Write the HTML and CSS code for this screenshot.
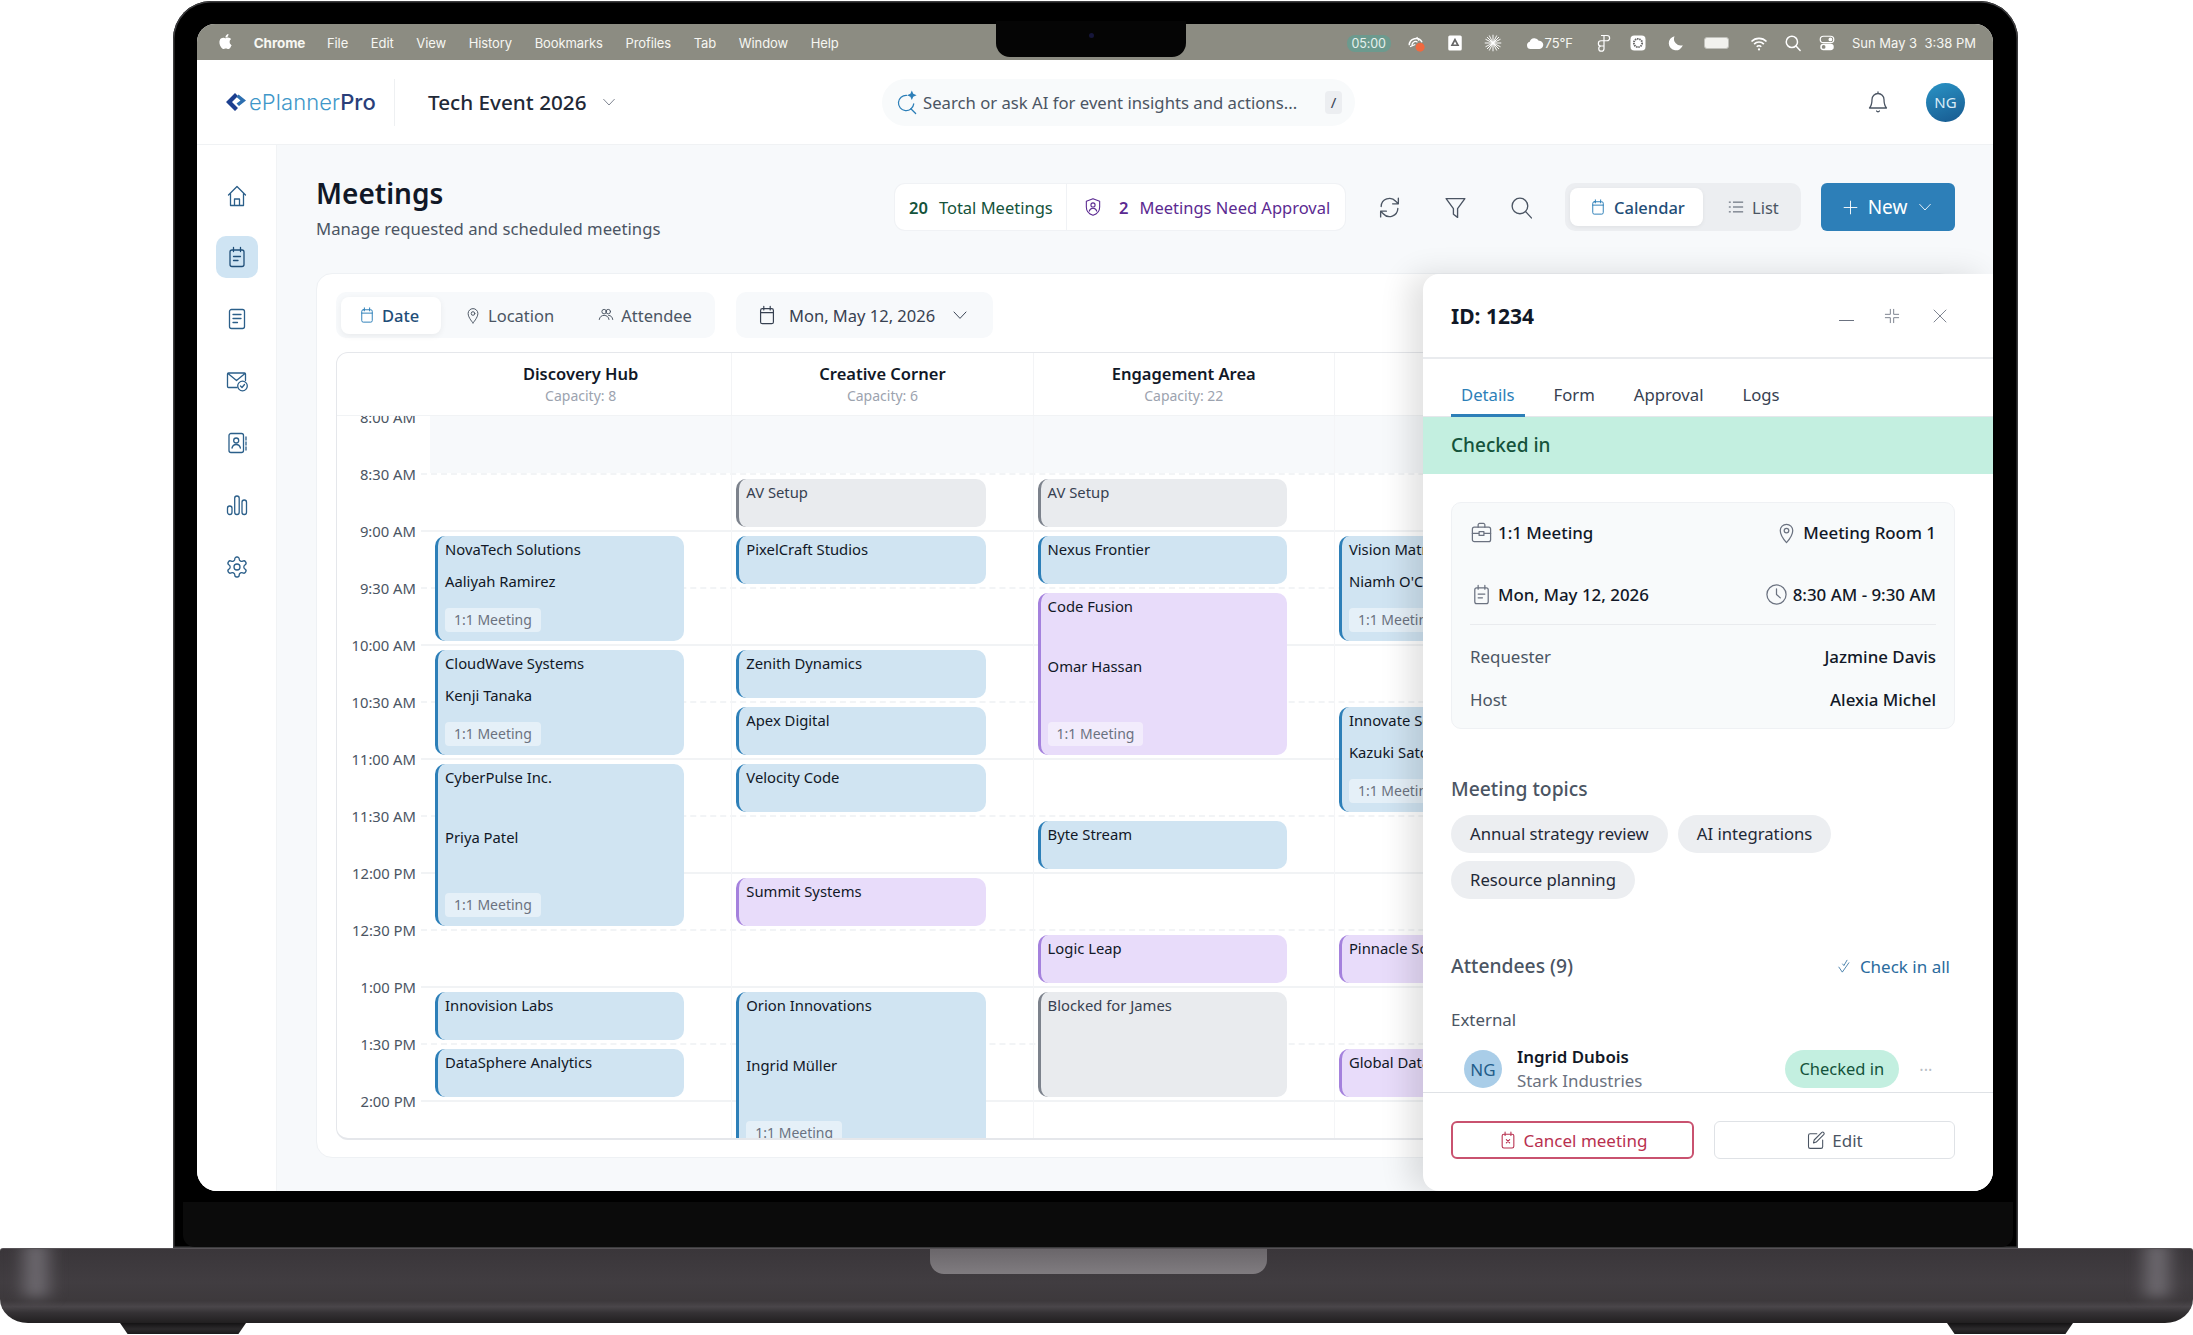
FILE: index.html
```html
<!DOCTYPE html>
<html lang="en">

<head>
    <meta charset="UTF-8">
    <title>ePlannerPro - Meetings</title>
    <link rel="stylesheet" href="styles.css">
</head>

<body>
    <svg class="icon-defs" xmlns="http://www.w3.org/2000/svg">
        <symbol id="i-cal" viewBox="0 0 24 24"><rect x="5" y="5" width="14" height="16.5" rx="2"/><path d="M5 9.5h14M8.5 2.5v4M15.5 2.5v4"/></symbol>
        <symbol id="i-cal-note" viewBox="0 0 24 24"><rect x="5" y="5" width="14" height="16.5" rx="2"/><path d="M8.5 2.5v4M15.5 2.5v4M8.5 11.5h7M8.5 15.5h4.5"/></symbol>
        <symbol id="i-cal-x" viewBox="0 0 24 24"><rect x="5" y="5" width="14" height="16.5" rx="2"/><path d="M8.5 2.5v4M15.5 2.5v4M10 11.5l4 4M14 11.5l-4 4"/></symbol>
        <symbol id="i-pin" viewBox="0 0 24 24"><path d="M12 22.5s6.5-6.8 6.5-12.5a6.5 6.5 0 1 0-13 0c0 5.7 6.5 12.5 6.5 12.5z"/><circle cx="12" cy="10" r="2.4"/></symbol>
        <symbol id="i-users" viewBox="0 0 24 24"><circle cx="9.5" cy="7.5" r="3"/><circle cx="15" cy="7.5" r="3"/><path d="M3 18c.5-3.5 3-5.5 6.5-5.5s6 2 6.5 5.5M15.5 12.5c3 0 5 2 5.5 5.5"/></symbol>
        <symbol id="i-chev" viewBox="0 0 24 24"><path d="M4 8l8 8.5L20 8"/></symbol>
        <symbol id="i-search" viewBox="0 0 24 24"><circle cx="10.5" cy="10.5" r="7.5"/><path d="M16 16l5.5 6"/></symbol>
        <symbol id="i-bell" viewBox="0 0 24 24"><path d="M12 3a6 6 0 0 0-6 6c0 5-1.2 7-2.5 8.5h17C19.2 16 18 14 18 9a6 6 0 0 0-6-6zM12 3V1.5M10.5 20.5c.7 1 2.3 1 3 0"/></symbol>
        <symbol id="i-refresh" viewBox="0 0 24 24"><path d="M4 11a8 8 0 0 1 14-5l2.5 2.5M20.5 3v5.5h-5.5M20 13a8 8 0 0 1-14 5l-2.5-2.5M3.5 21v-5.5h5.5"/></symbol>
        <symbol id="i-filter" viewBox="0 0 24 24"><path d="M3 3.5h18l-7 9.5v8.5l-4-3V13z"/></symbol>
        <symbol id="i-list" viewBox="0 0 24 24"><path d="M8.5 5.5H21M8.5 12H21M8.5 18.5H21M3 5.5h1.5M3 12h1.5M3 18.5h1.5"/></symbol>
        <symbol id="i-plus" viewBox="0 0 24 24"><path d="M12 3v18M3 12h18"/></symbol>
        <symbol id="i-shield" viewBox="0 0 24 24"><path d="M12 2l8 3v7c0 5-3.5 8.5-8 10-4.5-1.5-8-5-8-10V5z"/><circle cx="12" cy="9.5" r="2.5"/><path d="M7.5 17c.8-2.5 2.5-3.5 4.5-3.5s3.7 1 4.5 3.5"/></symbol>
        <symbol id="i-home" viewBox="0 0 24 24"><path d="M3.5 11L12 2.5 20.5 11M5.5 9.5V21.5h13V9.5M9.5 21.5v-6.5h5v6.5"/></symbol>
        <symbol id="i-doc" viewBox="0 0 24 24"><rect x="4.5" y="2.5" width="15" height="19" rx="2"/><path d="M8 7.5h8M8 11.5h8M8 15.5h4.5"/></symbol>
        <symbol id="i-mail" viewBox="0 0 24 24"><path d="M12 18.5H3.5a1 1 0 0 1-1-1V5a1 1 0 0 1 1-1h16a1 1 0 0 1 1 1v6.5M3 4.5l8.5 7 8.5-7"/><circle cx="17.5" cy="17" r="4.8"/><path d="M15.5 17l1.5 1.5 2.5-3"/></symbol>
        <symbol id="i-contact" viewBox="0 0 24 24"><rect x="4" y="2.5" width="14.5" height="19" rx="2"/><circle cx="11.2" cy="9.5" r="2.5"/><path d="M7 17c.6-2.5 2.2-3.5 4.2-3.5s3.600 1 4.2 3.5M21 6v3M21 11v3M21 16v3"/></symbol>
        <symbol id="i-bars" viewBox="0 0 24 24"><rect x="2.5" y="13" width="4.5" height="8.5" rx="2.2"/><rect x="9.7" y="3" width="4.5" height="18.5" rx="2.2"/><rect x="17" y="7" width="4.5" height="14.5" rx="2.2"/></symbol>
        <symbol id="i-gear" viewBox="0 0 24 24"><path d="M12.22 2h-.44a2 2 0 0 0-2 2v.18a2 2 0 0 1-1 1.73l-.43.25a2 2 0 0 1-2 0l-.15-.08a2 2 0 0 0-2.73.73l-.22.38a2 2 0 0 0 .73 2.73l.15.1a2 2 0 0 1 1 1.72v.51a2 2 0 0 1-1 1.74l-.15.09a2 2 0 0 0-.73 2.73l.22.38a2 2 0 0 0 2.73.73l.15-.08a2 2 0 0 1 2 0l.43.25a2 2 0 0 1 1 1.73V20a2 2 0 0 0 2 2h.44a2 2 0 0 0 2-2v-.18a2 2 0 0 1 1-1.73l.43-.25a2 2 0 0 1 2 0l.15.08a2 2 0 0 0 2.73-.73l.22-.39a2 2 0 0 0-.73-2.73l-.15-.08a2 2 0 0 1-1-1.74v-.5a2 2 0 0 1 1-1.74l.15-.09a2 2 0 0 0 .73-2.73l-.22-.38a2 2 0 0 0-2.73-.73l-.15.08a2 2 0 0 1-2 0l-.43-.25a2 2 0 0 1-1-1.73V4a2 2 0 0 0-2-2z"/><circle cx="12" cy="12" r="3"/></symbol>
        <symbol id="i-brief" viewBox="0 0 24 24"><rect x="2.5" y="6.5" width="19" height="15" rx="2"/><path d="M8.5 6.5V4a1.5 1.5 0 0 1 1.5-1.5h4A1.5 1.5 0 0 1 15.5 4v2.5M2.5 13h7M14.5 13h7M9.5 11h5v4h-5z"/></symbol>
        <symbol id="i-clock" viewBox="0 0 24 24"><circle cx="12" cy="12" r="10"/><path d="M12 6v6l4 3.5"/></symbol>
        <symbol id="i-check2" viewBox="0 0 24 24"><path d="M3 13l5.5 8L19 6M9 8l2 2.5L16 2"/></symbol>
        <symbol id="i-edit" viewBox="0 0 24 24"><path d="M13 4.5H5a2 2 0 0 0-2 2V20a2 2 0 0 0 2 2h13a2 2 0 0 0 2-2v-8M9 15.5l.8-3.5L19 2.8a1.8 1.8 0 0 1 2.5 2.5L12.3 14.5z"/></symbol>
        <symbol id="i-compress" viewBox="0 0 24 24"><path d="M9.5 2v7.5H2M14.5 2v7.5H22M9.5 22v-7.5H2M14.5 22v-7.5H22"/></symbol>
        <symbol id="i-close" viewBox="0 0 24 24"><path d="M3 3l18 18M21 3L3 21"/></symbol>
    </svg>

    <div class="laptop">
        <div class="lid">
            <div class="notch"><span class="camera"></span></div>
            <div class="screen">
                <div class="menubar">
                    <svg class="apple" viewBox="0 0 24 24"><path d="M12.152 6.896c-.948 0-2.415-1.078-3.96-1.04-2.04.027-3.91 1.183-4.961 3.014-2.117 3.675-.546 9.103 1.519 12.09 1.013 1.454 2.208 3.09 3.792 3.039 1.52-.065 2.09-.987 3.935-.987 1.831 0 2.35.987 3.96.948 1.637-.026 2.676-1.48 3.676-2.948 1.156-1.688 1.636-3.325 1.662-3.415-.039-.013-3.182-1.221-3.22-4.857-.026-3.04 2.48-4.494 2.597-4.559-1.429-2.09-3.623-2.324-4.39-2.376-2-.156-3.675 1.09-4.61 1.09zM15.53 3.83c.843-1.012 1.4-2.427 1.245-3.83-1.207.052-2.662.805-3.532 1.818-.78.896-1.454 2.338-1.273 3.714 1.338.104 2.715-.688 3.559-1.701"/></svg>
                    <b class="menu-app">Chrome</b>
                    <span>File</span><span>Edit</span><span>View</span><span>History</span><span>Bookmarks</span><span>Profiles</span><span>Tab</span><span>Window</span><span>Help</span>
                    <div class="status">
                        <span class="timer">05:00</span>
                        <svg class="st st-wider" viewBox="0 0 24 24"><path d="M3 15a9 9 0 0 1 17-4" fill="none" stroke="#fff" stroke-width="2"/><path d="M7 16a4.5 4.5 0 0 1 7-5M4 17l7-3M13 4l3 5" fill="none" stroke="#fff" stroke-width="1.6"/><circle cx="17.5" cy="17.5" r="6" fill="#f0693f"/></svg>
                        <svg class="st st-wide" viewBox="0 0 24 24"><rect x="3" y="2" width="18" height="20" rx="2" fill="#fff"/><path d="M12 7.5l4 7.5H8z" fill="none" stroke="#666" stroke-width="2.2"/></svg>
                        <svg class="st st-widest" viewBox="0 0 24 24"><path d="M12 1v22M1 12h22M4 4l16 16M20 4L4 20M7 2l10 20M17 2L7 22M2 7l20 10M22 7L2 17" stroke="#fff" stroke-width="1.3"/></svg>
                        <span class="weather"><svg class="st" viewBox="0 0 24 24"><path d="M6 20a5 5 0 0 1-1-9.8A6.5 6.5 0 0 1 17 9a5.5 5.5 0 0 1 1 11z" fill="#fff"/></svg>75°F</span>
                        <svg class="st" viewBox="0 0 24 24"><path d="M8 2h8a3.5 3.5 0 0 1 0 7h-4V2M12 9H8a3.5 3.5 0 0 0 0 7h4V9zM12 16v3.5A3.5 3.5 0 1 1 8 16" fill="none" stroke="#fff" stroke-width="1.6"/></svg>
                        <svg class="st st-wide" viewBox="0 0 24 24"><rect x="2" y="2" width="20" height="20" rx="5" fill="#fff"/><circle cx="12" cy="12" r="5.5" fill="none" stroke="#666" stroke-width="2.5" stroke-dasharray="2 1"/></svg>
                        <svg class="st" viewBox="0 0 24 24"><path d="M10 3a9.500 9.500 0 1 0 11 12A9 9 0 0 1 10 3z" fill="#fff"/></svg>
                        <span class="battery"></span>
                        <svg class="st" viewBox="0 0 24 24"><path d="M2 10a14 14 0 0 1 20 0M5.5 13.5a9 9 0 0 1 13 0M9 17a4 4 0 0 1 6 0" fill="none" stroke="#fff" stroke-width="2.2"/><circle cx="12" cy="20.5" r="1.5" fill="#fff"/></svg>
                        <svg class="st icon-line" viewBox="0 0 24 24"><use href="#i-search"/></svg>
                        <svg class="st" viewBox="0 0 24 24"><rect x="3" y="3" width="18" height="8.5" rx="4.2" fill="none" stroke="#fff" stroke-width="1.6"/><circle cx="16.5" cy="7.2" r="2.5" fill="#fff"/><rect x="3" y="13" width="18" height="8.5" rx="4.2" fill="#fff"/><circle cx="7.5" cy="17.2" r="2.5" fill="#8c8c82"/></svg>
                        <span class="clock">Sun May 3&nbsp;&nbsp;3:38 PM</span>
                    </div>
                </div>

                <header class="topbar">
                    <div class="logo">
                        <svg class="logo-mark" viewBox="0 0 20 18"><path d="M9 0L0 9l9 9 3-3-6-6 6-6z" fill="#1c3f8f"/><path d="M12.5 1.5L20 7.5 13 13l-2.5-2.5 4-3-4-3.5z" fill="#2d6fb0"/></svg>
                        <span class="logo-text">ePlanner<b>Pro</b></span>
                    </div>
                    <div class="event-select">Tech Event 2026 <svg class="icon-line chev" viewBox="0 0 24 24"><use href="#i-chev"/></svg></div>
                    <div class="ai-search">
                        <svg class="icon-line ai-icon" viewBox="0 0 24 24"><path d="M11 5a8 8 0 1 0 7.5 9"/><path d="M15.5 19l5 5"/><path d="M16.5 0l1.5 3.5 3.5 1.5-3.5 1.5-1.5 3.5-1.5-3.5L11.5 5l3.5-1.5z" fill="#2d7fb8" stroke="none"/></svg>
                        <span class="ai-text">Search or ask AI for event insights and actions...</span>
                        <kbd class="slash">/</kbd>
                    </div>
                    <div class="top-right">
                        <svg class="icon-line bell" viewBox="0 0 24 24"><use href="#i-bell"/></svg>
                        <span class="avatar">NG</span>
                    </div>
                </header>

                <div class="workspace">
                    <nav class="sidebar">
                        <a class="nav-item"><svg class="icon-line" viewBox="0 0 24 24"><use href="#i-home"/></svg></a>
                        <a class="nav-item active"><svg class="icon-line" viewBox="0 0 24 24"><use href="#i-cal-note"/></svg></a>
                        <a class="nav-item"><svg class="icon-line" viewBox="0 0 24 24"><use href="#i-doc"/></svg></a>
                        <a class="nav-item"><svg class="icon-line" viewBox="0 0 24 24"><use href="#i-mail"/></svg></a>
                        <a class="nav-item"><svg class="icon-line" viewBox="0 0 24 24"><use href="#i-contact"/></svg></a>
                        <a class="nav-item"><svg class="icon-line" viewBox="0 0 24 24"><use href="#i-bars"/></svg></a>
                        <a class="nav-item"><svg class="icon-line" viewBox="0 0 24 24"><use href="#i-gear"/></svg></a>
                    </nav>

                    <main class="content">
                        <div class="page-head">
                            <div class="page-title">
                                <h1>Meetings</h1>
                                <p>Manage requested and scheduled meetings</p>
                            </div>
                            <div class="stats">
                                <div class="stat stat-total"><b>20</b> Total Meetings</div>
                                <div class="stat stat-approve">
                                    <svg class="icon-line" viewBox="0 0 24 24"><use href="#i-shield"/></svg>
                                    <b>2</b> Meetings Need Approval
                                </div>
                            </div>
                            <div class="tools">
                                <svg class="icon-line" viewBox="0 0 24 24"><use href="#i-refresh"/></svg>
                                <svg class="icon-line" viewBox="0 0 24 24"><use href="#i-filter"/></svg>
                                <svg class="icon-line" viewBox="0 0 24 24"><use href="#i-search"/></svg>
                            </div>
                            <div class="view-toggle">
                                <div class="view-btn active"><svg class="icon-line" viewBox="0 0 24 24"><use href="#i-cal"/></svg>Calendar</div>
                                <div class="view-btn"><svg class="icon-line" viewBox="0 0 24 24"><use href="#i-list"/></svg>List</div>
                            </div>
                            <button class="new-btn"><svg class="icon-line plus" viewBox="0 0 24 24"><use href="#i-plus"/></svg>New<svg class="icon-line chev" viewBox="0 0 24 24"><use href="#i-chev"/></svg></button>
                        </div>

                        <section class="board">
                            <div class="board-bar">
                                <div class="mode-tabs">
                                    <div class="mode active"><svg class="icon-line" viewBox="0 0 24 24"><use href="#i-cal"/></svg>Date</div>
                                    <div class="mode"><svg class="icon-line" viewBox="0 0 24 24"><use href="#i-pin"/></svg>Location</div>
                                    <div class="mode"><svg class="icon-line" viewBox="0 0 24 24"><use href="#i-users"/></svg>Attendee</div>
                                </div>
                                <div class="date-pick">
                                    <svg class="icon-line" viewBox="0 0 24 24"><use href="#i-cal"/></svg>
                                    Mon, May 12, 2026
                                    <svg class="icon-line chev" viewBox="0 0 24 24"><use href="#i-chev"/></svg>
                                </div>
                            </div>

                            <div class="calendar">
                                <div class="cal-head">
                                    <div class="cal-corner"></div>
                                    <div class="room"><h3>Discovery Hub</h3><small>Capacity: 8</small></div>
                                    <div class="room"><h3>Creative Corner</h3><small>Capacity: 6</small></div>
                                    <div class="room"><h3>Engagement Area</h3><small>Capacity: 22</small></div>
                                    <div class="room"></div>
                                </div>
                                <div class="cal-body">
                                    <div class="cal-lines">
                                        <div class="slot hour closed"><span>8:00 AM</span><i></i></div>
                                        <div class="slot"><span>8:30 AM</span><i></i></div>
                                        <div class="slot hour"><span>9:00 AM</span><i></i></div>
                                        <div class="slot"><span>9:30 AM</span><i></i></div>
                                        <div class="slot hour"><span>10:00 AM</span><i></i></div>
                                        <div class="slot"><span>10:30 AM</span><i></i></div>
                                        <div class="slot hour"><span>11:00 AM</span><i></i></div>
                                        <div class="slot"><span>11:30 AM</span><i></i></div>
                                        <div class="slot hour"><span>12:00 PM</span><i></i></div>
                                        <div class="slot"><span>12:30 PM</span><i></i></div>
                                        <div class="slot hour"><span>1:00 PM</span><i></i></div>
                                        <div class="slot"><span>1:30 PM</span><i></i></div>
                                        <div class="slot hour"><span>2:00 PM</span><i></i></div>
                                    </div>
                                    <div class="cal-cols">
                                        <div class="col">
                                            <div class="ev blue" style="grid-row: 3 / span 2"><span>NovaTech Solutions</span><span class="who">Aaliyah Ramirez</span><em>1:1 Meeting</em></div>
                                            <div class="ev blue" style="grid-row: 5 / span 2"><span>CloudWave Systems</span><span class="who">Kenji Tanaka</span><em>1:1 Meeting</em></div>
                                            <div class="ev blue" style="grid-row: 7 / span 3"><span>CyberPulse Inc.</span><span class="who">Priya Patel</span><em>1:1 Meeting</em></div>
                                            <div class="ev blue" style="grid-row: 11"><span>Innovision Labs</span></div>
                                            <div class="ev blue" style="grid-row: 12"><span>DataSphere Analytics</span></div>
                                        </div>
                                        <div class="col">
                                            <div class="ev gray" style="grid-row: 2"><span>AV Setup</span></div>
                                            <div class="ev blue" style="grid-row: 3"><span>PixelCraft Studios</span></div>
                                            <div class="ev blue" style="grid-row: 5"><span>Zenith Dynamics</span></div>
                                            <div class="ev blue" style="grid-row: 6"><span>Apex Digital</span></div>
                                            <div class="ev blue" style="grid-row: 7"><span>Velocity Code</span></div>
                                            <div class="ev purple" style="grid-row: 9"><span>Summit Systems</span></div>
                                            <div class="ev blue" style="grid-row: 11 / span 3"><span>Orion Innovations</span><span class="who">Ingrid Müller</span><em>1:1 Meeting</em></div>
                                        </div>
                                        <div class="col">
                                            <div class="ev gray" style="grid-row: 2"><span>AV Setup</span></div>
                                            <div class="ev blue" style="grid-row: 3"><span>Nexus Frontier</span></div>
                                            <div class="ev purple" style="grid-row: 4 / span 3"><span>Code Fusion</span><span class="who">Omar Hassan</span><em>1:1 Meeting</em></div>
                                            <div class="ev blue" style="grid-row: 8"><span>Byte Stream</span></div>
                                            <div class="ev purple" style="grid-row: 10"><span>Logic Leap</span></div>
                                            <div class="ev gray" style="grid-row: 11 / span 2"><span>Blocked for James</span></div>
                                        </div>
                                        <div class="col">
                                            <div class="ev blue" style="grid-row: 3 / span 2"><span>Vision Matrix</span><span class="who">Niamh O'Connor</span><em>1:1 Meeting</em></div>
                                            <div class="ev blue" style="grid-row: 6 / span 2"><span>Innovate Solutions</span><span class="who">Kazuki Sato</span><em>1:1 Meeting</em></div>
                                            <div class="ev purple" style="grid-row: 10"><span>Pinnacle Software</span></div>
                                            <div class="ev purple" style="grid-row: 12"><span>Global Data</span></div>
                                        </div>
                                    </div>
                                </div>
                            </div>
                        </section>
                    </main>

                    <aside class="panel">
                        <div class="panel-head">
                            <h2>ID: 1234</h2>
                            <div class="panel-actions">
                                <span class="min-bar"></span>
                                <svg class="icon-line" viewBox="0 0 24 24"><use href="#i-compress"/></svg>
                                <svg class="icon-line" viewBox="0 0 24 24"><use href="#i-close"/></svg>
                            </div>
                        </div>
                        <div class="panel-tabs">
                            <a class="active">Details</a><a>Form</a><a>Approval</a><a>Logs</a>
                        </div>
                        <div class="status-bar">Checked in</div>
                        <div class="panel-body">
                            <div class="info-card">
                                <div class="info-row">
                                    <span class="info-item"><svg class="icon-line" viewBox="0 0 24 24"><use href="#i-brief"/></svg>1:1 Meeting</span>
                                    <span class="info-item"><svg class="icon-line" viewBox="0 0 24 24"><use href="#i-pin"/></svg>Meeting Room 1</span>
                                </div>
                                <div class="info-row second">
                                    <span class="info-item"><svg class="icon-line" viewBox="0 0 24 24"><use href="#i-cal-note"/></svg>Mon, May 12, 2026</span>
                                    <span class="info-item"><svg class="icon-line" viewBox="0 0 24 24"><use href="#i-clock"/></svg>8:30 AM - 9:30 AM</span>
                                </div>
                                <div class="info-pair first"><span>Requester</span><b>Jazmine Davis</b></div>
                                <div class="info-pair"><span>Host</span><b>Alexia Michel</b></div>
                            </div>

                            <h4 class="section-title">Meeting topics</h4>
                            <div class="chips">
                                <span>Annual strategy review</span>
                                <span>AI integrations</span>
                                <span>Resource planning</span>
                            </div>

                            <div class="att-head">
                                <h4 class="section-title">Attendees (9)</h4>
                                <a class="check-all"><svg class="icon-line" viewBox="0 0 24 24"><use href="#i-check2"/></svg>Check in all</a>
                            </div>
                            <div class="att-group">External</div>
                            <div class="att-row">
                                <span class="att-avatar">NG</span>
                                <div class="att-name"><b>Ingrid Dubois</b><span>Stark Industries</span></div>
                                <span class="badge">Checked in</span>
                                <span class="dots">•••</span>
                            </div>
                        </div>
                        <div class="panel-foot">
                            <button class="btn-cancel"><svg class="icon-line" viewBox="0 0 24 24"><use href="#i-cal-x"/></svg>Cancel meeting</button>
                            <button class="btn-edit"><svg class="icon-line" viewBox="0 0 24 24"><use href="#i-edit"/></svg>Edit</button>
                        </div>
                    </aside>
                </div>
            </div>
            <div class="chin"></div>
        </div>

        <div class="base"><div class="thumb"></div></div>
        <div class="feet"><span></span><span></span></div>
    </div>
</body>

</html>
```

FILE: styles.css
```css
* {
    box-sizing: border-box;
}

body {
    margin: 0;
    background: #fff;
    font-family: 'Noto Sans', Arial, sans-serif;
    color: #111827;
    overflow: hidden;
}

h1, h2, h3, h4, p {
    margin: 0;
}

button {
    font-family: inherit;
}

.icon-defs {
    display: none;
}

.icon-line {
    fill: none;
    stroke: currentColor;
    stroke-width: 1.3;
    stroke-linecap: round;
    stroke-linejoin: round;
    flex: none;
}

/* laptop */
.laptop {
    width: 2193px;
    height: 1335px;
    padding-top: 1px;
}

.lid {
    position: relative;
    width: 1845px;
    height: 1247px;
    margin-left: 173px;
    padding: 23px 25px 0 24px;
    background: #000;
    border-radius: 38px 38px 0 0;
    box-shadow: inset 0 0 0 1.5px #3c3c3e;
}

.notch {
    position: absolute;
    top: 20px;
    left: 823px;
    width: 190px;
    height: 36px;
    background: #050505;
    border-radius: 0 0 14px 14px;
    z-index: 5;
    display: flex;
    justify-content: center;
    padding-top: 12px;
}

.camera {
    width: 5px;
    height: 5px;
    border-radius: 50%;
    background: #16163a;
}

.screen {
    height: 1167px;
    background: #fff;
    border-radius: 18px 18px 20px 20px;
    overflow: hidden;
    display: flex;
    flex-direction: column;
}

.chin {
    height: 45px;
    margin: 11px -20px 0 -14px;
    background: #0b0b0b;
    border-radius: 0 0 12px 12px;
}

.base {
    position: relative;
    height: 75px;
    display: flex;
    justify-content: center;
    overflow: hidden;
    border-top: 1px solid #565256;
    border-radius: 3px 3px 28px 28px / 3px 3px 24px 24px;
    background: linear-gradient(180deg, #3a363a 0, #413d41 45%, #3d393c 70%, #4a464a 78%, #353235 86%, #211f20 100%);
}

.base::before, .base::after {
    content: "";
    position: absolute;
    top: -6px;
    width: 46px;
    height: 54px;
    background: linear-gradient(90deg, rgba(112, 108, 114, 0), #706c72 50%, rgba(112, 108, 114, 0));
    filter: blur(6px);
}

.base::before {
    left: 13px;
}

.base::after {
    right: 13px;
}

.thumb {
    width: 337px;
    height: 25px;
    margin-left: 3px;
    background: linear-gradient(180deg, #6a666a, #807c80);
    border-radius: 0 0 14px 14px;
}

.feet {
    display: flex;
    justify-content: space-between;
    padding: 0 120px;
}

.feet span {
    width: 126px;
    height: 11px;
    background: linear-gradient(180deg, #141314, #2c2a2c 55%, #1a191a);
    clip-path: polygon(0 0, 100% 0, 94% 100%, 6% 100%);
}

/* menu bar */
.menubar {
    height: 36px;
    flex: none;
    padding: 2px 0 0 21px;
    background: #8c8c82;
    color: #f7f7f2;
    display: flex;
    align-items: center;
    gap: 22.7px;
    font-family: Inter, 'Noto Sans', sans-serif;
    font-size: 13px;
    letter-spacing: -0.1px;
}

.apple {
    width: 15px;
    height: 17px;
    fill: #fff;
    margin-top: -3px;
}

.menu-app {
    font-size: 13.5px;
    font-weight: 700;
    margin: 0 -1px 0 -2px;
}

.status {
    margin-left: auto;
    display: flex;
    align-items: center;
    gap: 16px;
    padding-right: 17px;
}

.st {
    width: 18px;
    height: 18px;
    flex: none;
}

.st-wide {
    margin-right: 4px;
}

.st-wider {
    margin-right: 5px;
}

.st-widest {
    margin-right: 8px;
}

.status .icon-line {
    stroke-width: 2;
    color: #fff;
}

.timer {
    width: 44px;
    height: 17px;
    line-height: 17px;
    text-align: center;
    font-size: 12.5px;
    background: #6c9a8e;
    border-radius: 8px;
    color: #e6f0ec;
}

.weather {
    display: flex;
    align-items: center;
    gap: 1px;
    margin: 0 6px 0 0;
}

.battery {
    width: 25px;
    height: 12px;
    margin: 0 5px 0 3px;
    background: #f2f2ee;
    border: 1px solid #c0c0ba;
    border-radius: 3px;
}

.clock {
    letter-spacing: 0;
}

/* top bar */
.topbar {
    height: 85px;
    flex: none;
    display: flex;
    align-items: center;
    border-bottom: 1px solid #f0f2f4;
    padding-left: 29px;
}

.logo {
    width: 169px;
    height: 47px;
    display: flex;
    align-items: center;
    gap: 3px;
    border-right: 1px solid #eef0f2;
}

.logo-mark {
    width: 20px;
    height: 18px;
    flex: none;
}

.logo-text {
    font-family: Inter, 'Noto Sans', sans-serif;
    font-size: 22px;
    font-weight: 300;
    color: #3f97c9;
    letter-spacing: 0.1px;
}

.logo-text b {
    font-weight: 500;
    color: #2a3f7a;
}

.event-select {
    margin-left: 33px;
    width: 454px;
    display: flex;
    align-items: center;
    font-size: 20.7px;
    font-weight: 500;
    color: #1f2937;
}

.event-select .chev {
    width: 16px;
    height: 16px;
    margin-left: 15px;
    color: #6b7280;
}

.ai-search {
    width: 473px;
    height: 47px;
    background: #f8fafb;
    border-radius: 24px;
    display: flex;
    align-items: center;
    padding-left: 14px;
    font-size: 16.7px;
    color: #4b5563;
}

.ai-icon {
    width: 23px;
    height: 26px;
    color: #2d7fb8;
}

.ai-text {
    margin-left: 4px;
    flex: 1;
}

.slash {
    width: 17px;
    height: 23px;
    margin-right: 13px;
    background: #eceef1;
    border-radius: 4px;
    text-align: center;
    font: 15px/23px 'Noto Sans', sans-serif;
    color: #374151;
}

.top-right {
    margin-left: auto;
    display: flex;
    align-items: center;
    gap: 36px;
    padding-right: 28px;
}

.bell {
    width: 24px;
    height: 25px;
    color: #4b5563;
}

.avatar {
    width: 39px;
    height: 39px;
    border-radius: 50%;
    background: linear-gradient(160deg, #2a94c6, #17598f);
    color: #d9ecf7;
    font-size: 15px;
    display: flex;
    align-items: center;
    justify-content: center;
}

/* workspace */
.workspace {
    position: relative;
    flex: 1;
    display: flex;
    min-height: 0;
}

.sidebar {
    width: 80px;
    flex: none;
    background: #fff;
    border-right: 1px solid #f1f3f5;
    display: flex;
    flex-direction: column;
    align-items: center;
    padding-top: 20px;
}

.nav-item {
    width: 42px;
    height: 62px;
    flex: none;
    display: flex;
    align-items: center;
    justify-content: center;
    color: #2b5f8a;
}

.nav-item svg {
    width: 24px;
    height: 24px;
}

.nav-item.active {
    background: #cfe4f3;
    border-radius: 10px;
    color: #1f4e78;
    height: 42px;
    margin: 9px 0 10px;
}

.content {
    flex: 1;
    min-width: 0;
    background: #f7f9fb;
    padding: 30px 38px 33px 39px;
    display: flex;
    flex-direction: column;
}

.page-head {
    display: flex;
    align-items: center;
    height: 66px;
    padding-bottom: 2px;
    flex: none;
}

.page-title {
    width: 579px;
    margin-top: 2px;
}

.page-title h1 {
    font-size: 28px;
    line-height: 36px;
    font-weight: 600;
    color: #111827;
}

.page-title p {
    margin-top: 6px;
    font-size: 16.7px;
    line-height: 24px;
    color: #4b5563;
}

.stats {
    width: 450px;
    height: 46px;
    flex: none;
    display: flex;
    background: #fff;
    border-radius: 10px;
    box-shadow: 0 0 0 1px #f0f2f5;
    font-size: 16.5px;
}

.stat {
    display: flex;
    align-items: center;
    white-space: nowrap;
}

.stat b {
    font-weight: 600;
}

.stat-total {
    width: 172px;
    padding-left: 14px;
    gap: 11px;
    color: #14533b;
    border-right: 1px solid #f0f2f5;
}

.stat-approve {
    padding-left: 16px;
    color: #5b2a91;
}

.stat-approve svg {
    width: 20px;
    height: 22px;
    margin-right: 16px;
}

.stat-approve b {
    margin-right: 11px;
}

.tools {
    width: 220px;
    flex: none;
    display: flex;
    padding-left: 32px;
    gap: 41px;
    color: #4b5563;
}

.tools svg {
    width: 25px;
    height: 25px;
}

.view-toggle {
    width: 236px;
    height: 48px;
    flex: none;
    display: flex;
    align-items: center;
    padding: 0 5px;
    background: #eceef1;
    border-radius: 10px;
    font-size: 16.5px;
    color: #4b5563;
}

.view-btn {
    display: flex;
    align-items: center;
    gap: 7px;
    height: 38px;
    padding: 0 0 0 24px;
}

.view-btn svg {
    width: 18px;
    height: 22px;
}

.view-btn.active {
    width: 133px;
    padding-left: 19px;
    background: #fff;
    border-radius: 8px;
    color: #1f4e78;
    font-weight: 500;
    box-shadow: 0 1px 4px rgba(0, 0, 0, 0.06);
}

.view-btn.active svg {
    color: #2d7fb8;
}

.new-btn {
    width: 134px;
    height: 48px;
    flex: none;
    margin-left: 20px;
    padding-right: 7px;
    border: none;
    border-radius: 6px;
    background: #2d7fb8;
    color: #fff;
    font-size: 19px;
    display: flex;
    align-items: center;
    justify-content: center;
    gap: 8px;
}

.new-btn .plus {
    width: 17px;
    height: 17px;
    margin-right: 1px;
}

.new-btn .chev {
    width: 16px;
    height: 16px;
    margin-left: 2px;
}

/* board */
.board {
    flex: 1;
    min-height: 0;
    margin-top: 32px;
    padding: 19px 20px 17px;
    background: #fff;
    border: 1px solid #eef1f4;
    border-radius: 16px;
    display: flex;
    flex-direction: column;
    gap: 14px;
}

.board-bar {
    display: flex;
    gap: 21px;
    height: 46px;
    flex: none;
    margin: -1px 0 0 -1px;
    font-size: 16.5px;
    color: #4b5563;
}

.mode-tabs {
    width: 379px;
    display: flex;
    align-items: center;
    padding-left: 5px;
    background: #f7f9fb;
    border-radius: 10px;
}

.mode {
    flex: none;
    display: flex;
    align-items: center;
    gap: 6px;
    padding-right: 20px;
}

.mode svg {
    width: 18px;
    height: 20px;
    margin-left: 23px;
}

.mode.active {
    width: 100px;
    height: 37px;
    padding: 0;
    background: #fff;
    border-radius: 8px;
    color: #1f4e78;
    font-weight: 500;
    box-shadow: 0 2px 6px rgba(0, 0, 0, 0.06);
}

.mode.active svg {
    margin-left: 17px;
    color: #2d7fb8;
}

.date-pick {
    width: 257px;
    display: flex;
    align-items: center;
    background: #f7f9fb;
    border-radius: 10px;
    color: #374151;
    padding-left: 20px;
    gap: 11px;
}

.date-pick svg {
    width: 22px;
    height: 24px;
}

.date-pick .chev {
    width: 18px;
    height: 18px;
    margin-left: 5px;
}

/* calendar */
.calendar {
    flex: 1;
    min-height: 0;
    margin-left: -1px;
    border: 1px solid #e5e7eb;
    border-bottom-width: 2px;
    border-radius: 12px;
    overflow: hidden;
    display: flex;
    flex-direction: column;
}

.cal-head {
    height: 63px;
    flex: none;
    display: grid;
    grid-template-columns: 93px repeat(4, 301.3px);
    text-align: center;
    border-bottom: 1px solid #f1f3f5;
}

.room {
    padding-top: 9px;
    border-left: 1px solid #f3f4f6;
}

.room:nth-child(2) {
    border-left: none;
}

.room h3 {
    font-size: 16.5px;
    line-height: 24px;
    font-weight: 600;
}

.room small {
    display: block;
    font-size: 14px;
    line-height: 20px;
    color: #9ca3af;
}

.cal-body {
    flex: 1;
    min-height: 0;
    display: grid;
    overflow: hidden;
}

.cal-lines, .cal-cols {
    grid-area: 1 / 1;
}

.slot {
    height: 57px;
    display: flex;
    font-size: 14.8px;
    color: #4b5563;
}

.slot span {
    width: 79px;
    flex: none;
    text-align: right;
    line-height: 20px;
    margin-top: -9px;
    height: 20px;
    white-space: nowrap;
}

.slot i {
    flex: 1;
    margin-left: 5px;
    border-top: 2px dashed #f2f4f6;
}

.slot.hour i {
    border-top: 2px solid #f1f3f5;
}

.slot.closed i {
    border-top: none;
    margin-left: 14px;
    background: #f7f9fb;
}

.cal-cols {
    display: grid;
    grid-template-columns: repeat(4, 301.3px);
    margin-left: 93px;
}

.col {
    display: grid;
    grid-template-rows: repeat(13, 57px);
    border-left: 1px solid #f4f5f7;
}

.col:first-child {
    border-left-color: transparent;
}

.ev {
    grid-column: 1;
    margin: 6px 47px 3px 4px;
    padding: 3px 10px 9px 7px;
    border-left: 3px solid #2d7fb8;
    border-radius: 10px;
    font-size: 14.8px;
    line-height: 20px;
    display: flex;
    flex-direction: column;
    justify-content: space-between;
    min-height: 0;
    overflow: hidden;
    white-space: nowrap;
    color: #111827;
}

.ev .who {
    margin-bottom: 6px;
}

.ev em {
    font-style: normal;
    align-self: flex-start;
    height: 24px;
    line-height: 24px;
    padding: 0 9px;
    border-radius: 4px;
    font-size: 14px;
    color: #6b7280;
    background: rgba(255, 255, 255, 0.45);
}

.ev.blue {
    background: #d0e4f2;
}

.ev.purple {
    background: #e8dcfa;
    border-left-color: #a481dd;
}

.ev.gray {
    background: #e9ebee;
    border-left-color: #7c828c;
    color: #374151;
}

/* details panel */
.panel {
    position: absolute;
    top: 129px;
    right: 0;
    bottom: 0;
    width: 570px;
    background: #fff;
    border-radius: 16px 0 20px 16px;
    box-shadow: -14px 0 30px rgba(0, 0, 0, 0.12);
    display: flex;
    flex-direction: column;
    overflow: hidden;
}

.panel-head {
    height: 85px;
    flex: none;
    display: flex;
    align-items: center;
    justify-content: space-between;
    padding: 0 45px 0 28px;
    border-bottom: 2px solid #e9ebee;
}

.panel-head h2 {
    font-size: 21px;
    font-weight: 700;
}

.panel-actions {
    display: flex;
    align-items: center;
    gap: 32px;
    color: #6b7280;
}

.panel-actions svg {
    width: 16px;
    height: 16px;
}

.min-bar {
    width: 15px;
    height: 1.5px;
    margin: 10px -2px 0 0;
    background: #6b7280;
}

.panel-tabs {
    height: 58px;
    flex: none;
    display: flex;
    align-items: flex-end;
    padding-left: 28px;
    border-bottom: 1px solid #e5e7eb;
    font-size: 16.7px;
    color: #374151;
}

.panel-tabs a {
    height: 39px;
    padding: 6px 10px 0;
    margin-right: 19px;
    line-height: 24px;
}

.panel-tabs a.active {
    color: #2d7fb8;
    border-bottom: 3px solid #2d7fb8;
    margin-bottom: -1px;
    height: 40px;
}

.status-bar {
    height: 57px;
    flex: none;
    padding-left: 28px;
    line-height: 57px;
    background: #c3efe0;
    color: #14533b;
    font-size: 19px;
    font-weight: 500;
}

.panel-body {
    flex: 1;
    min-height: 0;
    overflow: hidden;
    padding: 28px 38px 0 28px;
}

.info-card {
    height: 227px;
    padding: 0 18px;
    background: #f8fafb;
    border: 1px solid #eff1f4;
    border-radius: 10px;
}

.info-row {
    display: flex;
    justify-content: space-between;
    padding-top: 17px;
    height: 61px;
    font-size: 16.9px;
    font-weight: 500;
}

.info-row.second {
    height: 61px;
    padding-top: 18px;
    border-bottom: 1px solid #e9ebee;
}

.info-item {
    display: flex;
    align-items: center;
    height: 24px;
    color: #111827;
}

.info-item svg {
    width: 23px;
    height: 23px;
    margin-right: 5px;
    color: #6b7280;
}

.info-pair {
    display: flex;
    justify-content: space-between;
    align-items: center;
    height: 43px;
    font-size: 16.9px;
    color: #4b5563;
}

.info-pair.first {
    margin-top: 10px;
}

.info-pair b {
    font-weight: 500;
    color: #111827;
}

.section-title {
    font-size: 19.3px;
    font-weight: 500;
    line-height: 28px;
    color: #4b5563;
}

.info-card + .section-title {
    margin-top: 46px;
}

.chips {
    display: flex;
    flex-wrap: wrap;
    gap: 8px 10px;
    margin-top: 12px;
    width: 420px;
}

.chips span {
    height: 38px;
    line-height: 38px;
    padding: 0 19px;
    border-radius: 19px;
    background: #eceef1;
    font-size: 16.7px;
    color: #1f2937;
}

.att-head {
    display: flex;
    justify-content: space-between;
    align-items: center;
    margin-top: 53px;
    padding-right: 5px;
}

.check-all {
    display: flex;
    align-items: center;
    gap: 8px;
    font-size: 17px;
    color: #2b6c9e;
}

.check-all svg {
    width: 15px;
    height: 17px;
}

.att-group {
    margin-top: 28px;
    font-size: 16.9px;
    line-height: 24px;
    color: #4b5563;
}

.att-row {
    display: flex;
    align-items: center;
    margin-top: 18px;
    padding-left: 13px;
    height: 38px;
}

.att-avatar {
    width: 38px;
    height: 38px;
    flex: none;
    border-radius: 50%;
    background: #a9cde8;
    color: #1f5c8a;
    font-size: 17px;
    display: flex;
    align-items: center;
    justify-content: center;
}

.att-name {
    flex: 1;
    margin-left: 15px;
    display: flex;
    flex-direction: column;
    font-size: 16.9px;
    line-height: 24px;
    color: #6b7280;
}

.att-name b {
    font-weight: 600;
    color: #111827;
}

.badge {
    width: 114px;
    height: 38px;
    line-height: 38px;
    text-align: center;
    border-radius: 19px;
    background: #c3efe0;
    color: #14533b;
    font-size: 16.5px;
}

.dots {
    margin: 0 22px 0 21px;
    font-size: 9px;
    letter-spacing: 1px;
    color: #b9bec5;
}

.panel-foot {
    height: 99px;
    flex: none;
    display: flex;
    gap: 20px;
    padding: 28px 38px 33px 28px;
    border-top: 1px solid #dfe2e6;
}

.panel-foot button {
    flex: 1;
    height: 38px;
    background: #fff;
    border-radius: 6px;
    font-size: 17px;
    display: flex;
    align-items: center;
    justify-content: center;
    gap: 6px;
}

.panel-foot svg {
    width: 20px;
    height: 20px;
}

.btn-cancel {
    border: 2px solid #c9526f;
    color: #b8304f;
}

.btn-edit {
    border: 1.5px solid #dfe2e6;
    color: #4b5563;
}
```
